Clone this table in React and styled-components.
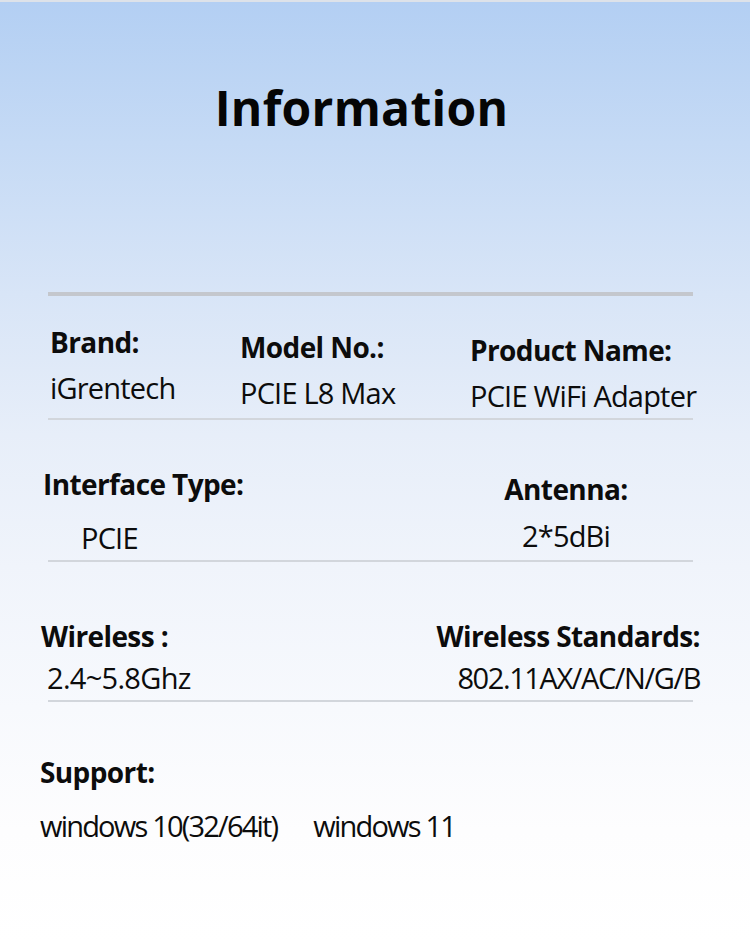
import React from "react";
import styled, { createGlobalStyle } from "styled-components";

const Global = createGlobalStyle`
  html, body { margin: 0; padding: 0; }
  body {
    font-family: "Open Sans", "Noto Sans", sans-serif;
    color: #0c0c0c;
    background: #ffffff;
  }
`;

const Page = styled.div`
  width: 750px;
  min-height: 943px;
  box-sizing: border-box;
  border-top: 2px solid #dde2e9;
  padding-top: 82px;
  background: linear-gradient(
    180deg,
    #b3cff3 0%,
    #c5daf5 15%,
    #d8e5f7 31%,
    #e7eef9 46%,
    #f0f4fb 60%,
    #f7f9fd 75%,
    #fdfdfe 88%,
    #ffffff 100%
  );
`;

const Title = styled.h1`
  margin: 0;
  padding-right: 27px;
  font-size: 48px;
  line-height: 1;
  font-weight: 700;
  text-align: center;
  letter-spacing: 0.3px;
  color: #050505;
`;

const Divider = styled.div`
  height: 4px;
  margin: 160px 57px 0 48px;
  background: #c4c7cd;
`;

const Section = styled.section`
  padding: ${(p) => p.$top}px ${(p) => p.$right || 0}px 8px ${(p) => p.$left}px;
`;

const Grid = styled.div`
  display: grid;
  grid-template-columns: ${(p) => p.$cols};
  align-items: start;
`;

const Column = styled.div`
  display: flex;
  flex-direction: column;
  align-items: ${(p) => p.$align || "flex-start"};
  margin-top: ${(p) => p.$offset || 0}px;
`;

const Label = styled.div`
  font-size: 28px;
  line-height: 1;
  font-weight: 700;
  white-space: nowrap;
  letter-spacing: ${(p) => p.$ls ?? -0.6}px;
`;

const Value = styled.div`
  font-size: 29px;
  line-height: 1;
  font-weight: 400;
  white-space: nowrap;
  margin-top: ${(p) => p.$gap}px;
  margin-left: ${(p) => p.$indent || 0}px;
  letter-spacing: ${(p) => p.$ls ?? -0.8}px;
`;

const Rule = styled.div`
  height: 2px;
  margin: 0 57px 0 48px;
  background: #d2d6dc;
`;

const SupportRow = styled.div`
  display: flex;
  gap: 36px;
  margin-top: 25px;
`;

const Field = ({ label, value, offset, align, gap, indent, labelLs, valueLs }) => (
  <Column $offset={offset} $align={align}>
    <Label $ls={labelLs}>{label}</Label>
    <Value $gap={gap} $indent={indent} $ls={valueLs}>
      {value}
    </Value>
  </Column>
);

export default function App() {
  return (
    <>
      <Global />
      <Page>
        <Title>Information</Title>
        <Divider />

        <Section $top={32} $left={50}>
          <Grid $cols="190px 230px 1fr">
            <Field label="Brand:" value="iGrentech" gap={17} />
            <Field label="Model No.:" value="PCIE L8 Max" gap={17} offset={5} />
            <Field label="Product Name:" value="PCIE WiFi Adapter" gap={17} offset={8} />
          </Grid>
        </Section>
        <Rule />

        <Section $top={50} $left={43}>
          <Grid $cols="397px 252px">
            <Field label="Interface Type:" value="PCIE" gap={25} indent={38} />
            <Field label="Antenna:" value="2*5dBi" gap={18} offset={5} align="center" />
          </Grid>
        </Section>
        <Rule />

        <Section $top={60} $left={41} $right={50}>
          <Grid $cols="1fr 1fr">
            <Field label="Wireless :" value="2.4~5.8Ghz" gap={13} indent={6} valueLs={-0.7} />
            <Field
              label="Wireless Standards:"
              value="802.11AX/AC/N/G/B"
              gap={13}
              align="flex-end"
              valueLs={-1.4}
            />
          </Grid>
        </Section>
        <Rule />

        <Section $top={56} $left={40}>
          <Label>Support:</Label>
          <SupportRow>
            <Value $gap={0} $ls={-1.8}>windows 10(32/64it)</Value>
            <Value $gap={0} $ls={-1.8}>windows 11</Value>
          </SupportRow>
        </Section>
      </Page>
    </>
  );
}
